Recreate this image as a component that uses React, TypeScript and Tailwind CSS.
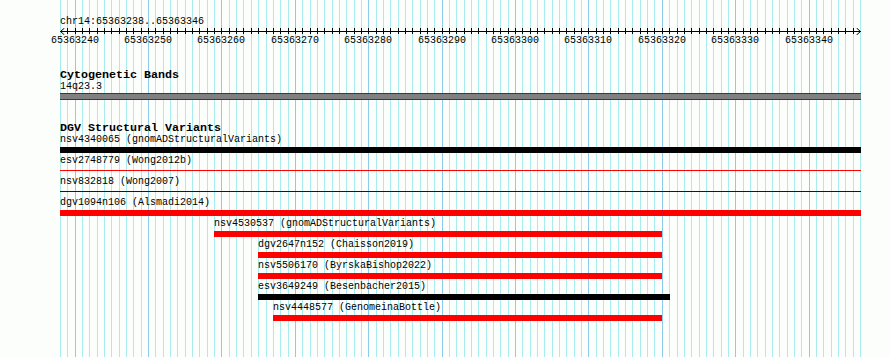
import React from "react";

const PX = 800 / 109;
const X0 = 60;
const BP0 = 65363238;
const xAt = (k: number) => X0 + k * PX;

type Feature = {
  label: string;
  left: number;
  right: number;
  kind: "bar" | "line";
  color: string;
};

const features: Feature[] = [
  { label: "nsv4340065 (gnomADStructuralVariants)", left: 60, right: 861, kind: "bar", color: "bg-[#000000]" },
  { label: "esv2748779 (Wong2012b)", left: 60, right: 861, kind: "line", color: "bg-[#ff0000]" },
  { label: "nsv832818 (Wong2007)", left: 60, right: 861, kind: "line", color: "bg-[#0000cc]" },
  { label: "dgv1094n106 (Alsmadi2014)", left: 60, right: 861, kind: "bar", color: "bg-[#ff0000]" },
  { label: "nsv4530537 (gnomADStructuralVariants)", left: 214, right: 662, kind: "bar", color: "bg-[#ff0000]" },
  { label: "dgv2647n152 (Chaisson2019)", left: 258, right: 662, kind: "bar", color: "bg-[#ff0000]" },
  { label: "nsv5506170 (ByrskaBishop2022)", left: 258, right: 662, kind: "bar", color: "bg-[#ff0000]" },
  { label: "esv3649249 (Besenbacher2015)", left: 258, right: 670, kind: "bar", color: "bg-[#000000]" },
  { label: "nsv4448577 (GenomeinaBottle)", left: 273, right: 662, kind: "bar", color: "bg-[#ff0000]" },
];

function Grid() {
  const lines = [];
  for (let k = 0; k <= 109; k++) {
    const x = Math.round(xAt(k)) + 0.5;
    const major = (BP0 + k) % 10 === 0;
    lines.push(
      <line key={k} x1={x} x2={x} y1={0} y2={357} stroke={major ? "#8ccbec" : "#a8ecf0"} strokeWidth={1} />
    );
  }
  return (
    <svg className="absolute left-0 top-0" width={890} height={357}>
      {lines}
    </svg>
  );
}

function Axis() {
  const ticks = [];
  for (let k = 1; k <= 108; k++) {
    const x = Math.round(xAt(k)) + 0.5;
    ticks.push(<line key={k} x1={x} x2={x} y1={0} y2={6} stroke="#000" strokeWidth={1} />);
  }
  return (
    <svg width={890} height={7} className="block">
      <line x1={60} x2={861} y1={3.5} y2={3.5} stroke="#000" strokeWidth={1} />
      {ticks}
      <polyline points="64.5,0 60.5,3.5 64.5,7" fill="none" stroke="#000" strokeWidth={1} />
      <polyline points="856.5,0 860.5,3.5 856.5,7" fill="none" stroke="#000" strokeWidth={1} />
    </svg>
  );
}

function RulerLabels() {
  const labels = [];
  for (let k = 0; k <= 109; k++) {
    if ((BP0 + k) % 10 === 0) {
      labels.push(
        <div
          key={k}
          className="absolute top-0 w-[48px] text-center"
          style={{ left: Math.round(xAt(k)) - 24 }}
        >
          {BP0 + k}
        </div>
      );
    }
  }
  return <div className="relative h-[12px] leading-[12px]">{labels}</div>;
}

export default function App() {
  return (
    <div
      className="relative w-[890px] h-[357px] overflow-hidden bg-[#fcfefc] text-[10px] text-black"
      style={{ fontFamily: '"Liberation Mono", monospace' }}
    >
      <Grid />
      <div className="relative flex flex-col">
        {/* Ruler */}
        <div className="pt-[16px] pl-[60px] h-[28px] leading-[12px] whitespace-nowrap">
          chr14:65363238..65363346
        </div>
        <Axis />
        <RulerLabels />

        {/* Cytogenetic bands */}
        <div className="mt-[23px] pl-[60px] h-[11px] leading-[11px] text-[11.67px] font-bold whitespace-nowrap">
          Cytogenetic Bands
        </div>
        <div className="pl-[60px] h-[12px] leading-[12px]">14q23.3</div>
        <div className="ml-[60px] w-[801px] h-[7px] bg-[#808080] border-y border-[#3a3a3a]" />

        {/* DGV */}
        <div className="mt-[23px] pl-[60px] h-[11px] leading-[11px] text-[11.67px] font-bold whitespace-nowrap">
          DGV Structural Variants
        </div>
        <div className="flex flex-col">
          {features.map((f) => (
            <div key={f.label} className="h-[21px]">
              <div className="h-[12px] leading-[12px] whitespace-nowrap" style={{ marginLeft: f.left }}>
                {f.label}
              </div>
              {f.kind === "bar" ? (
                <div className={`mt-[1px] h-[6px] ${f.color}`} style={{ marginLeft: f.left, width: f.right - f.left }} />
              ) : (
                <div className="mt-[1px] h-[6px] pt-[2px]" style={{ marginLeft: f.left, width: f.right - f.left }}>
                  <div className={`h-[1px] ${f.color}`} />
                </div>
              )}
            </div>
          ))}
        </div>
      </div>
    </div>
  );
}
